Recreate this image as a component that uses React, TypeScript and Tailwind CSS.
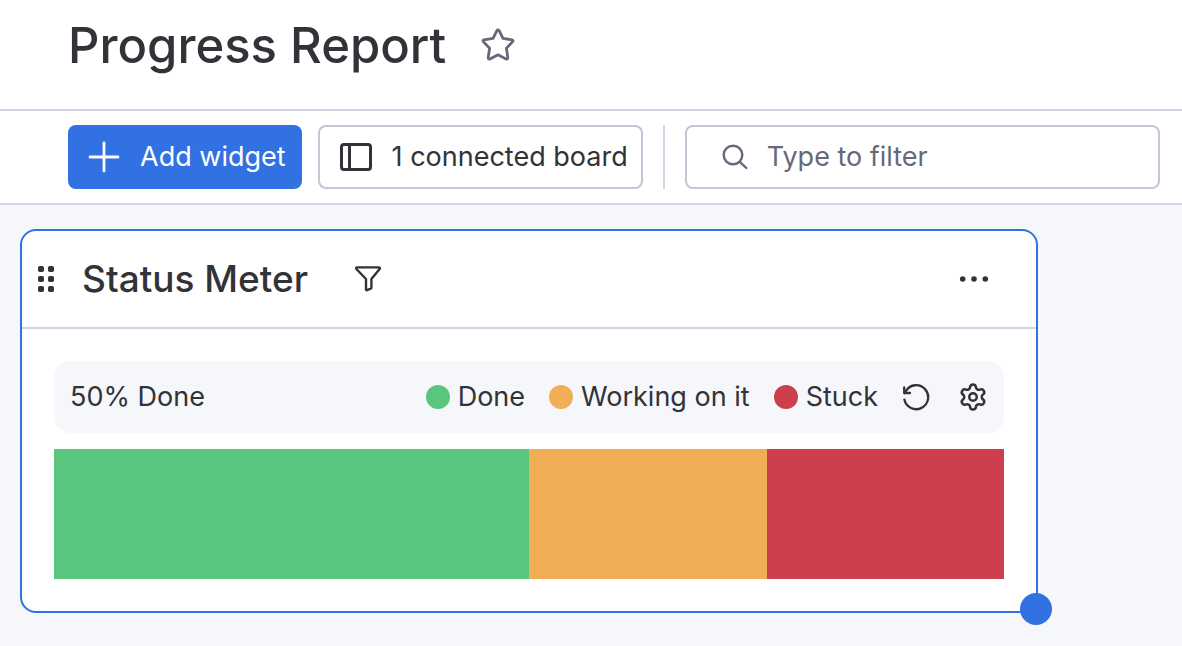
import { Settings } from "lucide-react";

const statuses = [
  { label: "Done", dot: "bg-[#5ac57d]", bar: "bg-[#5ac57d]", share: 50 },
  { label: "Working on it", dot: "bg-[#f2ae57]", bar: "bg-[#f2ae57]", share: 25 },
  { label: "Stuck", dot: "bg-[#cd3f4f]", bar: "bg-[#cd3f4f]", share: 25 },
];

function StarIcon() {
  return (
    <svg width="34" height="34" viewBox="0 0 34 34" fill="none" stroke="currentColor" strokeWidth="2.8" strokeLinejoin="round">
      <path d="M15.9 2.6Q17 1 18.1 2.6L22 10.4L31 11.8Q32.7 12.4 31.5 13.9L25.4 20.2L26.8 29.6Q26.8 31.5 25 30.9L17 26.8L9 30.9Q7.2 31.5 7.2 29.6L8.6 20.2L2.5 13.9Q1.3 12.4 3 11.8L12 10.4Z" />
    </svg>
  );
}

function PlusIcon() {
  return (
    <svg width="32" height="32" viewBox="0 0 32 32" fill="none" stroke="currentColor" strokeWidth="2.8" strokeLinecap="round">
      <path d="M16 2v28M2 16h28" />
    </svg>
  );
}

function BoardIcon() {
  return (
    <svg width="32" height="28" viewBox="0 0 32 28" fill="none" stroke="currentColor" strokeWidth="3">
      <rect x="1.5" y="1.5" width="29" height="25" rx="2.5" />
      <path d="M9.5 2v24" />
    </svg>
  );
}

function SearchIcon() {
  return (
    <svg width="28" height="28" viewBox="0 0 28 28" fill="none" stroke="currentColor" strokeWidth="2.4" strokeLinecap="round">
      <circle cx="12" cy="12" r="9.3" />
      <path d="M18.8 18.8L25.3 25" />
    </svg>
  );
}

function DragIcon() {
  return (
    <svg width="16" height="26" viewBox="0 0 16 26" fill="currentColor">
      {[0, 10, 20].map((y) => (
        <g key={y}>
          <rect x="0" y={y} width="6" height="6" rx="1.8" />
          <rect x="10" y={y} width="6" height="6" rx="1.8" />
        </g>
      ))}
    </svg>
  );
}

function FilterIcon() {
  return (
    <svg width="28" height="28" viewBox="0 0 28 28" fill="none" stroke="currentColor" strokeWidth="2.4" strokeLinejoin="round">
      <path d="M3 2.4H25Q26.4 2.6 25.6 4L17.4 14V22.6Q17.4 23.4 16.8 23.7L13 25.2Q12 25.4 12 24.4V14L2.4 4Q1.6 2.6 3 2.4Z" />
    </svg>
  );
}

function MoreIcon() {
  return (
    <svg width="30" height="6" viewBox="0 0 30 6" fill="currentColor">
      <circle cx="3.7" cy="3" r="2.8" />
      <circle cx="15" cy="3" r="2.8" />
      <circle cx="26.3" cy="3" r="2.8" />
    </svg>
  );
}

function ResetIcon() {
  return (
    <svg width="28" height="28" viewBox="0 0 28 28" fill="none" stroke="currentColor" strokeWidth="2.3" strokeLinecap="round" strokeLinejoin="round">
      <path d="M2.4 16.6A12 12 0 1 0 4 7.8L2.6 10" />
      <path d="M2.2 4.4V10H8" />
    </svg>
  );
}

export default function App() {
  return (
    <div className="min-h-screen bg-[#f5f7fb] font-['Inter',sans-serif] text-[#323338]">
      <header className="flex h-[111px] items-start gap-[35px] border-b-2 border-[#d0d4e4] bg-white px-[68px] pt-4">
        <h1 className="text-[49px] leading-[60px] font-medium">Progress Report</h1>
        <button type="button" aria-label="Add to favorites" className="mt-3 text-[#676879]">
          <StarIcon />
        </button>
      </header>

      <div className="flex border-b-2 border-[#d0d4e4] bg-white pt-[14px] pr-[22px] pb-[14px] pl-[68px]">
        <button type="button" className="flex h-16 items-center gap-5 rounded-lg bg-[#3171e2] pr-4 pl-5 text-[27px] whitespace-nowrap text-white">
          <PlusIcon />
          Add widget
        </button>
        <button type="button" className="ml-4 flex h-16 items-center gap-5 rounded-lg border-2 border-[#c3c6d6] pr-[13px] pl-5 text-[27px] whitespace-nowrap">
          <BoardIcon />
          1 connected board
        </button>
        <div className="mx-5 w-[2px] bg-[#d0d4e4]" />
        <label className="flex h-16 min-w-0 flex-1 items-center gap-[18px] rounded-lg border-2 border-[#c3c6d6] px-[34px] text-[#676879]">
          <SearchIcon />
          <input
            type="text"
            aria-label="Type to filter"
            placeholder="Type to filter"
            className="min-w-0 flex-1 bg-transparent text-[27px] outline-none placeholder:text-[#676879]"
          />
        </label>
      </div>

      <main className="pt-6 pr-36 pb-8 pl-5">
        <section className="relative rounded-2xl border-2 border-[#3171e2] bg-white">
          <div className="flex h-[98px] items-center border-b-2 border-[#d0d4e4] pr-[47px] pl-4">
            <DragIcon />
            <h2 className="ml-7 text-[37px] font-medium">Status Meter</h2>
            <button type="button" aria-label="Filter" className="ml-[46px]">
              <FilterIcon />
            </button>
            <button type="button" aria-label="More options" className="ml-auto">
              <MoreIcon />
            </button>
          </div>

          <div className="p-8">
            <div className="flex h-[72px] items-center rounded-2xl bg-[#f5f7fb] px-4 text-[27px] whitespace-nowrap">
              <span>50% Done</span>
              <ul className="ml-auto flex gap-6">
                {statuses.map((status) => (
                  <li key={status.label} className="flex items-center gap-2">
                    <span className={`size-6 rounded-full ${status.dot}`} />
                    {status.label}
                  </li>
                ))}
              </ul>
              <button type="button" aria-label="Reset" className="ml-6">
                <ResetIcon />
              </button>
              <button type="button" aria-label="Settings" className="ml-7">
                <Settings size={30} strokeWidth={2} />
              </button>
            </div>
            <div className="mt-4 flex h-[130px]">
              {statuses.map((status) => (
                <div key={status.label} className={status.bar} style={{ width: `${status.share}%` }} />
              ))}
            </div>
          </div>

          <span className="absolute -right-4 -bottom-[14px] size-8 rounded-full bg-[#3171e2]" />
        </section>
      </main>
    </div>
  );
}
